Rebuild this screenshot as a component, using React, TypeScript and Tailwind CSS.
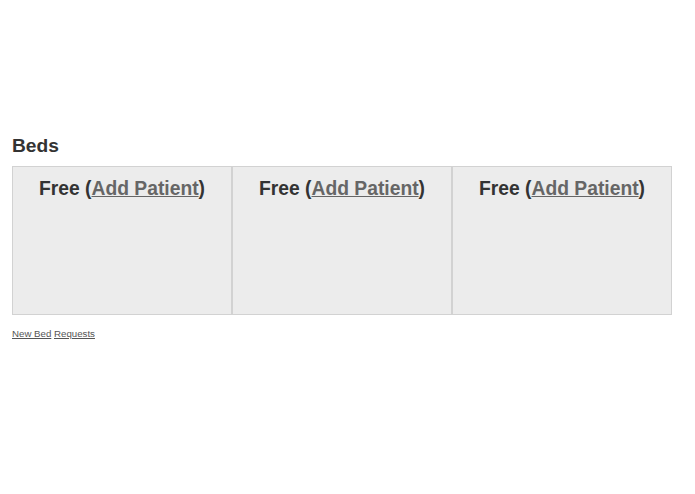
import React from "react";

const beds = [1, 2, 3];

export default function App() {
  return (
    <div className="min-h-[494px] bg-white px-3 pt-[135px] text-[#333] [font-family:'Liberation_Sans',Arial,sans-serif]">
      <h2 className="text-[19.2px] font-bold leading-[22px]">Beds</h2>
      <div className="mt-[9px] flex w-[660px]">
        {beds.map((b) => (
          <div
            key={b}
            className="h-[149px] w-[220px] border border-[#d2d2d2] bg-[#ececec] pt-[11px] text-center"
          >
            <h3 className="text-[19.3px] font-bold leading-[22px]">
              Free (
              <a href="#" className="text-[#666] underline">
                Add Patient
              </a>
              )
            </h3>
          </div>
        ))}
      </div>
      <p className="mt-[13px] text-[9.7px] leading-[12px] text-[#555]">
        <a href="#" className="underline">New Bed</a>{" "}
        <a href="#" className="underline">Requests</a>
      </p>
    </div>
  );
}
